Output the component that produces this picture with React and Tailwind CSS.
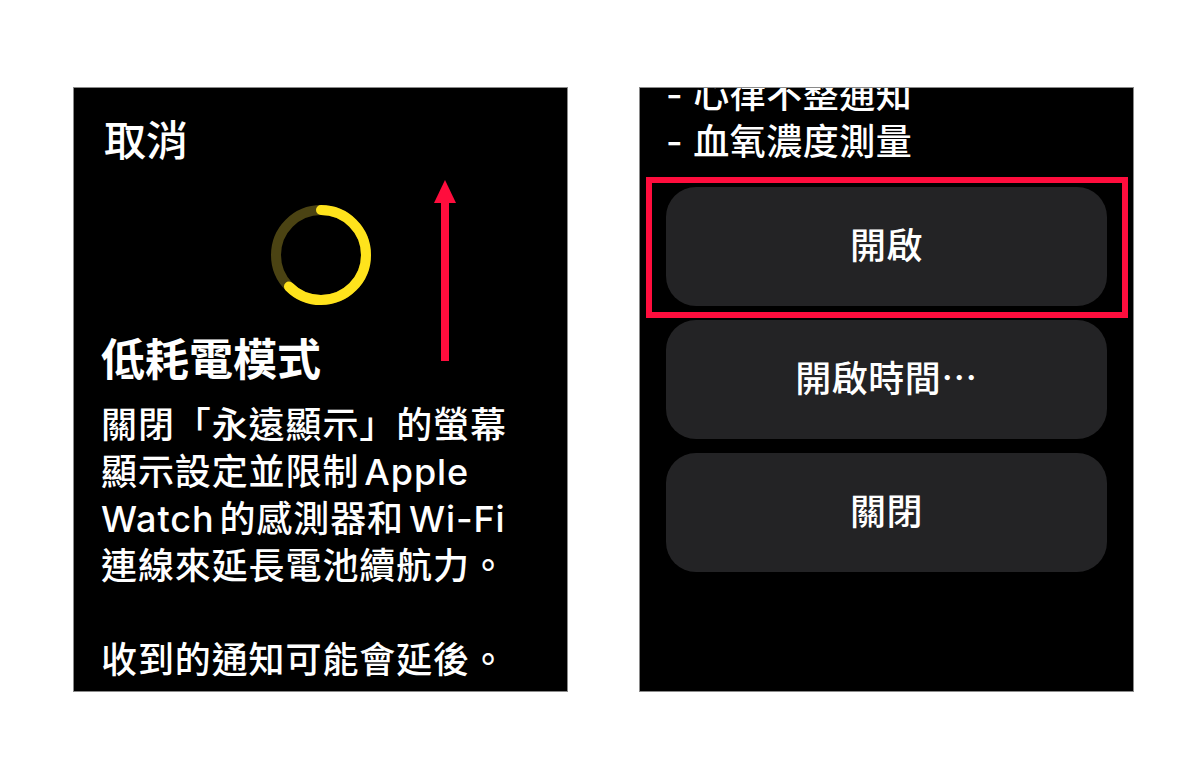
import React from "react";

const font = { fontFamily: '"Inter", "Noto Sans CJK TC", "Noto Sans CJK SC", sans-serif' };

function Ring() {
  const c = 2 * Math.PI * 45;
  return (
    <svg width="100" height="100" viewBox="0 0 100 100" className="block">
      <circle cx="50" cy="50" r="45" fill="none" stroke="#4b4313" strokeWidth="10" />
      <circle
        cx="50"
        cy="50"
        r="45"
        fill="none"
        stroke="#ffe31c"
        strokeWidth="10"
        strokeLinecap="round"
        strokeDasharray={`${c * 0.625} ${c}`}
        transform="rotate(-90 50 50)"
      />
    </svg>
  );
}

function Arrow() {
  return (
    <svg width="24" height="182" viewBox="0 0 24 182" className="absolute left-[359px] top-[92px]">
      <polygon points="12,0 23,23 1,23" fill="#ff0d3d" />
      <rect x="8" y="20" width="8" height="161" fill="#ff0d3d" />
    </svg>
  );
}

function Btn({ children, highlight }) {
  return (
    <div className="relative h-[119px] rounded-[30px] bg-[#232325] flex items-center justify-center text-white text-[36px] leading-[47px] font-medium tracking-[0.5px]">
      <span>{children}</span>
      {highlight && (
        <div className="absolute -left-[20px] -right-[21px] -top-[10px] -bottom-[12px] border-[6px] border-[#ff0d3d]" />
      )}
    </div>
  );
}

export default function App() {
  return (
    <div className="w-[1200px] h-[780px] bg-white flex gap-[71px] pl-[73px] pt-[87px]" style={font}>
      {/* Left panel */}
      <div className="relative w-[495px] h-[605px] bg-black border border-[#8a8a8a] overflow-hidden text-white pl-[27px]">
        <div className="pt-[29px] pl-[3px] text-[42px] leading-[48px] font-medium">取消</div>
        <div className="mt-[40px] flex justify-center pr-[27px]">
          <Ring />
        </div>
        <div className="mt-[29px] text-[44px] leading-[52px] font-bold">低耗電模式</div>
        <div className="mt-[16px] text-[36px] leading-[47px] font-medium tracking-[0.9px] whitespace-nowrap">
          <div>關閉「永遠顯示」的螢幕</div>
          <div>
            顯示設定並限制<span className="ml-[5px]">Apple</span>
          </div>
          <div>
            Watch<span className="ml-[5px]">的感測器和</span>
            <span className="ml-[5px]">Wi-Fi</span>
          </div>
          <div>連線來延長電池續航力。</div>
          <div className="h-[47px]" />
          <div>收到的通知可能會延後。</div>
        </div>
        <Arrow />
      </div>

      {/* Right panel */}
      <div className="relative w-[495px] h-[605px] bg-black border border-[#8a8a8a] overflow-hidden text-white px-[26px]">
        <div className="mt-[-16px] text-[36px] leading-[47px] font-medium tracking-[0.5px] whitespace-nowrap">
          <div>- 心律不整通知</div>
          <div>- 血氧濃度測量</div>
        </div>
        <div className="mt-[21px] flex flex-col gap-[14px]">
          <Btn highlight>開啟</Btn>
          <Btn>開啟時間⋯</Btn>
          <Btn>關閉</Btn>
        </div>
      </div>
    </div>
  );
}
